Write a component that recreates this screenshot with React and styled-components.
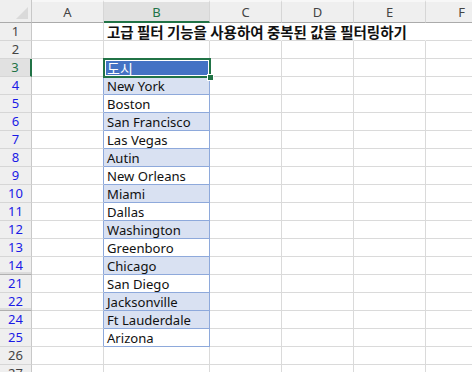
import React from "react";
import styled, { createGlobalStyle, css } from "styled-components";

const GlobalStyle = createGlobalStyle`
  html, body {
    margin: 0;
    padding: 0;
    background: #ffffff;
    overflow: hidden;
  }
  body {
    font-family: "Noto Sans", "Noto Sans CJK KR", sans-serif;
  }
`;

const COLS = ["A", "B", "C", "D", "E", "F"];

const rows = [
  { n: 1, title: "고급 필터 기능을 사용하여 중복된 값을 필터링하기" },
  { n: 2 },
  { n: 3, city: "도시", head: true, filtered: true },
  { n: 4, city: "New York", band: true, filtered: true },
  { n: 5, city: "Boston", filtered: true },
  { n: 6, city: "San Francisco", band: true, filtered: true },
  { n: 7, city: "Las Vegas", filtered: true },
  { n: 8, city: "Autin", band: true, filtered: true },
  { n: 9, city: "New Orleans", filtered: true },
  { n: 10, city: "Miami", band: true, filtered: true },
  { n: 11, city: "Dallas", filtered: true },
  { n: 12, city: "Washington", band: true, filtered: true },
  { n: 13, city: "Greenboro", filtered: true },
  { n: 14, city: "Chicago", band: true, filtered: true, gap: true },
  { n: 21, city: "San Diego", filtered: true },
  { n: 22, city: "Jacksonville", band: true, filtered: true, gap: true },
  { n: 24, city: "Ft Lauderdale", band: true, filtered: true },
  { n: 25, city: "Arizona", filtered: true },
  { n: 26 },
  { n: 27 },
];

const App = () => {
  return (
    <>
      <GlobalStyle />
      <Sheet>
        <Corner>
          <svg width="12" height="12" viewBox="0 0 12 12">
            <polygon points="12,0 12,12 0,12" fill="#dadada" />
          </svg>
        </Corner>
        {COLS.map((c) => (
          <ColHead key={c} $active={c === "B"}>
            {c}
          </ColHead>
        ))}

        {rows.map((r) => (
          <React.Fragment key={r.n}>
            <RowHead $active={r.head} $filtered={r.filtered && !r.head} $gap={r.gap}>
              {r.n}
            </RowHead>
            {COLS.map((c) => {
              if (c === "B") {
                if (r.title) {
                  return (
                    <Cell key={c} $noRight>
                      <Title>{r.title}</Title>
                    </Cell>
                  );
                }
                if (r.head) {
                  return (
                    <HeaderCell key={c}>
                      {r.city}
                      <FillHandle />
                    </HeaderCell>
                  );
                }
                if (r.city) {
                  return (
                    <TableCell key={c} $band={r.band}>
                      {r.city}
                    </TableCell>
                  );
                }
              }
              const inTable = c === "A" && r.city;
              const overflow = r.title && (c === "C" || c === "D" || c === "E");
              return <Cell key={c} $tableEdge={inTable} $noRight={overflow} />;
            })}
          </React.Fragment>
        ))}
      </Sheet>
    </>
  );
};

const Sheet = styled.div`
  display: grid;
  grid-template-columns: 32px 72px 106px 72px 72px 72px 72px;
  grid-template-rows: 23px repeat(20, 18px);
  width: 472px;
  height: 372px;
  overflow: hidden;
  background: #ffffff;
`;

const Corner = styled.div`
  box-sizing: border-box;
  background: #efefef;
  border-right: 1px solid #c8c8c8;
  border-bottom: 1px solid #ababab;
  display: flex;
  align-items: flex-end;
  justify-content: flex-end;
  padding: 0 3px 3px 0;
`;

const ColHead = styled.div`
  box-sizing: border-box;
  background: #efefef;
  border-right: 1px solid #d6d6d6;
  border-bottom: 1px solid #ababab;
  border-top: 2px solid #f7f7f7;
  display: flex;
  align-items: center;
  justify-content: center;
  font-family: "Noto Sans", sans-serif;
  font-size: 13px;
  color: #444444;
  ${(p) =>
    p.$active &&
    css`
      background: #e1e1e1;
      color: #217346;
      border-bottom: 2px solid #217346;
    `}
`;

const RowHead = styled.div`
  box-sizing: border-box;
  background: #efefef;
  border-right: 1px solid #c8c8c8;
  border-bottom: 1px solid #d6d6d6;
  display: flex;
  align-items: center;
  justify-content: center;
  font-family: "Noto Sans", sans-serif;
  font-size: 13px;
  color: #444444;
  padding-bottom: 1px;
  ${(p) =>
    p.$filtered &&
    css`
      color: #1a1ae6;
    `}
  ${(p) =>
    p.$gap &&
    css`
      border-bottom: 1px solid #b0b0b0;
      box-shadow: inset 0 -2px 0 #dcdcdc;
    `}
  ${(p) =>
    p.$active &&
    css`
      background: #e1e1e1;
      color: #217346;
      border-right: 2px solid #217346;
    `}
`;

const Cell = styled.div`
  box-sizing: border-box;
  position: relative;
  border-right: 1px solid #dadada;
  border-bottom: 1px solid #dadada;
  min-width: 0;
  ${(p) =>
    p.$noRight &&
    css`
      border-right-color: transparent;
    `}
  ${(p) =>
    p.$tableEdge &&
    css`
      border-right-color: #8ea9db;
    `}
`;

const Title = styled.div`
  position: absolute;
  left: 3px;
  bottom: 0;
  white-space: nowrap;
  font-family: "Noto Sans CJK KR", sans-serif;
  font-size: 14.5px;
  letter-spacing: 0;
  font-weight: 700;
  line-height: 17px;
  color: #111111;
  z-index: 1;
`;

const TableCell = styled.div`
  box-sizing: border-box;
  border-right: 1px solid #8ea9db;
  border-bottom: 1px solid #8ea9db;
  background: ${(p) => (p.$band ? "#d9e1f2" : "#ffffff")};
  padding: 1px 3px 0;
  display: flex;
  align-items: center;
  font-size: 13.1px;
  line-height: 16px;
  color: #111111;
  white-space: nowrap;
`;

const HeaderCell = styled.div`
  box-sizing: border-box;
  position: relative;
  background: #4472c4;
  padding: 0 3px;
  display: flex;
  align-items: center;
  font-family: "Noto Sans CJK KR", sans-serif;
  font-size: 14px;
  line-height: 17px;
  color: #ffffff;
  outline: 2px solid #217346;
  outline-offset: -1px;
  z-index: 2;
  box-shadow: inset 0 0 0 2px #ffffff;
`;

const FillHandle = styled.span`
  position: absolute;
  right: -4px;
  bottom: -4px;
  width: 5px;
  height: 5px;
  background: #217346;
  border: 1px solid #ffffff;
  z-index: 3;
`;

export default App;
